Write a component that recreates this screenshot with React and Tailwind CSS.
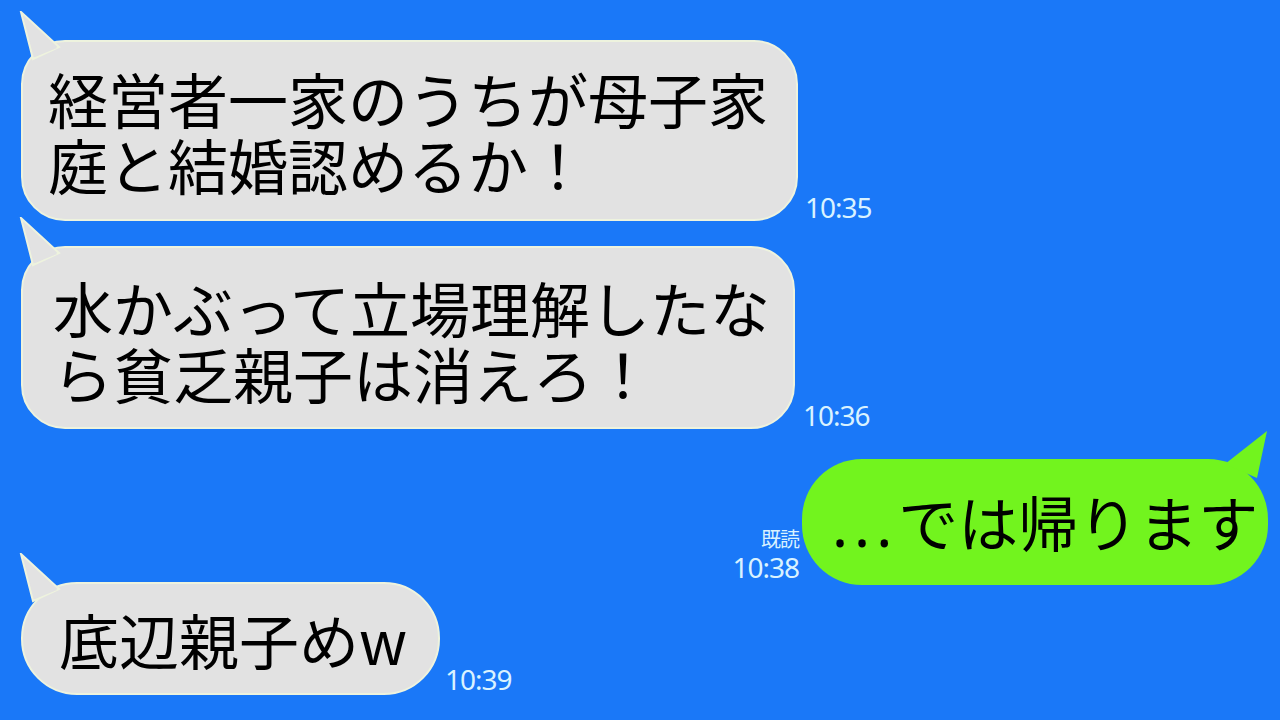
import React from "react";

const jp = { fontFamily: '"Noto Sans CJK JP", "Noto Sans", sans-serif' };

function LeftTail() {
  return (
    <svg
      className="absolute left-[-4px] top-[-31px]"
      width="48"
      height="50"
      viewBox="0 0 48 50"
    >
      <path d="M2 1 L40 36 L14 48 Z" fill="#e2e2e2" stroke="#eef3de" strokeWidth="2" />
      <path d="M4 5 L38 37 L16 46 Z" fill="#e2e2e2" />
    </svg>
  );
}

function RightTail() {
  return (
    <svg
      className="absolute right-[-3px] top-[-29px]"
      width="56"
      height="52"
      viewBox="0 0 56 52"
    >
      <path d="M52 1 L42 48 L10 34 Z" fill="#72f41e" />
    </svg>
  );
}

function Time({ children, className = "" }) {
  return (
    <div
      className={"text-[28px] leading-[26px] tracking-[-1px] text-[#d9f2ff] " + className}
      style={{ fontFamily: '"Noto Sans", sans-serif' }}
    >
      {children}
    </div>
  );
}

function LeftBubble({ lines, className, time, timeClass }) {
  return (
    <div className="flex items-end">
      <div className={"relative rounded-[44px] bg-[#e2e2e2] border-2 border-[#eef3de] flex flex-col justify-center text-[60px] leading-[66px] text-black " + className}>
        <LeftTail />
        {lines.map((l) => (
          <div key={l} className="relative whitespace-nowrap">
            {l}
          </div>
        ))}
      </div>
      <Time className={timeClass}>{time}</Time>
    </div>
  );
}

export default function App() {
  return (
    <div className="w-[1280px] h-[720px] overflow-hidden bg-[#1a78f8] flex flex-col pt-[40px] pl-[21px]" style={jp}>
      <LeftBubble
        lines={["経営者一家のうちが母子家", "庭と結婚認めるか！"]}
        className="w-[777px] h-[181px] pl-[25px]"
        time="10:35"
        timeClass="ml-[7px] mb-[1px]"
      />
      <div className="h-[25px]" />
      <LeftBubble
        lines={["水かぶって立場理解したな", "ら貧乏親子は消えろ！"]}
        className="w-[774px] h-[183px] pl-[30px] pt-[4px]"
        time="10:36"
        timeClass="ml-[8px] mb-[1px]"
      />
      <div className="h-[30px]" />
      <div className="flex items-end justify-end pr-[12px]">
        <div className="flex flex-col items-end mr-[3px] mb-[5px]">
          <div className="text-[20px] leading-[22px] mb-[4px] text-[#d9f2ff] tracking-[-1px]">既読</div>
          <Time>10:38</Time>
        </div>
        <div className="relative w-[466px] h-[126px] rounded-[60px] bg-[#72f41e] flex items-center pl-[30px] text-[60px] leading-[66px] text-black">
          <RightTail />
          <span className="relative whitespace-nowrap">
            <span className="tracking-[6px]" style={{ fontFamily: '"Noto Sans", sans-serif' }}>...</span>
            では帰ります
          </span>
        </div>
      </div>
      <div className="h-[0px] -mt-[3px]" />
      <LeftBubble
        lines={["底辺親子めw"]}
        className="w-[419px] h-[113px] pl-[36px] rounded-[56px]"
        time="10:39"
        timeClass="ml-[5px] mb-[3px]"
      />
    </div>
  );
}
